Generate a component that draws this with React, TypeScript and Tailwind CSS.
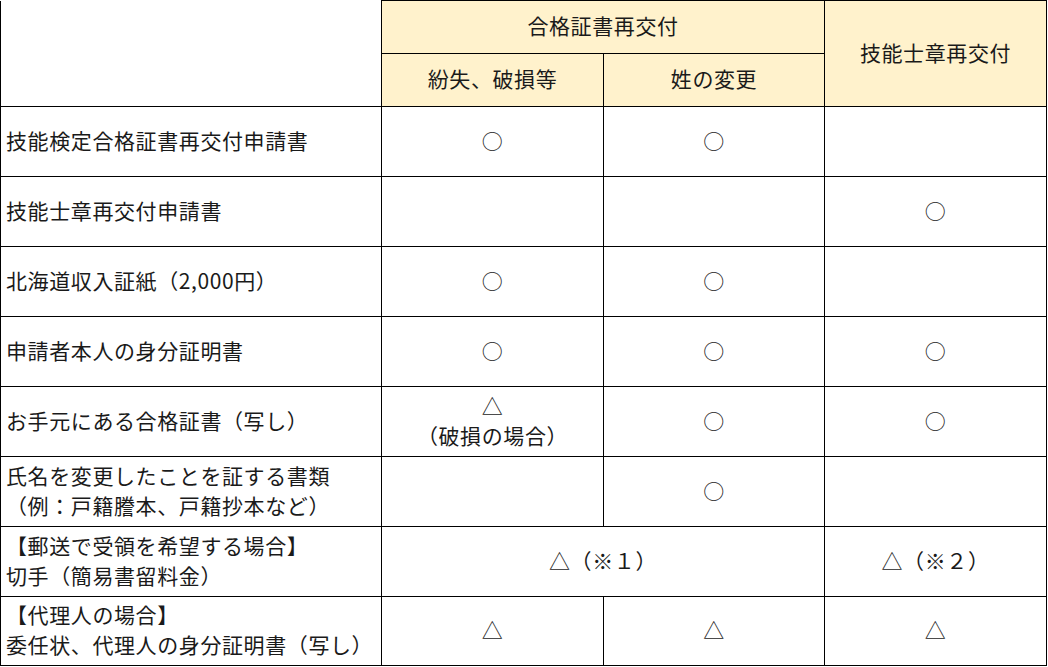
import React from 'react';

type Row = {
  label: React.ReactNode;
  cells: React.ReactNode[];
  spans?: number[];
};

const rows: Row[] = [
  { label: '技能検定合格証書再交付申請書', cells: ['○', '○', ''] },
  { label: '技能士章再交付申請書', cells: ['', '', '○'] },
  { label: '北海道収入証紙（2,000円）', cells: ['○', '○', ''] },
  { label: '申請者本人の身分証明書', cells: ['○', '○', '○'] },
  {
    label: 'お手元にある合格証書（写し）',
    cells: [
      <>
        <div>△</div>
        <div>（破損の場合）</div>
      </>,
      '○',
      '○',
    ],
  },
  {
    label: (
      <>
        <div>氏名を変更したことを証する書類</div>
        <div>（例：戸籍謄本、戸籍抄本など）</div>
      </>
    ),
    cells: ['', '○', ''],
  },
  {
    label: (
      <>
        <div>【郵送で受領を希望する場合】</div>
        <div>切手（簡易書留料金）</div>
      </>
    ),
    cells: ['△（※１）', '△（※２）'],
    spans: [2, 1],
  },
  {
    label: (
      <>
        <div>【代理人の場合】</div>
        <div>委任状、代理人の身分証明書（写し）</div>
      </>
    ),
    cells: ['△', '△', '△'],
  },
];

export default function App() {
  return (
    <div
      className="w-[1048px] h-[667px] bg-white text-[#1a1a1a] text-[21px] leading-[30px] tracking-[0.6px]"
      style={{ fontFamily: '"Noto Sans CJK JP", "Noto Sans", sans-serif' }}
    >
      <table className="table-fixed border-collapse w-[1046px]">
        <colgroup>
          <col className="w-[381px]" />
          <col className="w-[222px]" />
          <col className="w-[221px]" />
          <col className="w-[222px]" />
        </colgroup>
        <thead>
          <tr className="h-[53px]">
            <th rowSpan={2} className="border-l border-r border-b border-black font-normal" />
            <th colSpan={2} className="border border-black bg-[#fff2cc] font-normal text-center align-middle pb-[4px]">
              合格証書再交付
            </th>
            <th rowSpan={2} className="border border-black bg-[#fff2cc] font-normal text-center align-middle pb-[4px]">
              技能士章再交付
            </th>
          </tr>
          <tr className="h-[53px]">
            <th className="border border-black bg-[#fff2cc] font-normal text-center align-middle pb-[4px]">紛失、破損等</th>
            <th className="border border-black bg-[#fff2cc] font-normal text-center align-middle pb-[4px]">姓の変更</th>
          </tr>
        </thead>
        <tbody>
          {rows.map((row, i) => (
            <tr key={i} className={i === rows.length - 1 ? 'h-[69px]' : 'h-[70px]'}>
              <td className="border border-black px-[5px] pb-[4px] align-middle text-left">{row.label}</td>
              {row.cells.map((c, j) => (
                <td
                  key={j}
                  colSpan={row.spans ? row.spans[j] : 1}
                  className="border border-black pb-[4px] text-center align-middle"
                >
                  {c}
                </td>
              ))}
            </tr>
          ))}
        </tbody>
      </table>
    </div>
  );
}
